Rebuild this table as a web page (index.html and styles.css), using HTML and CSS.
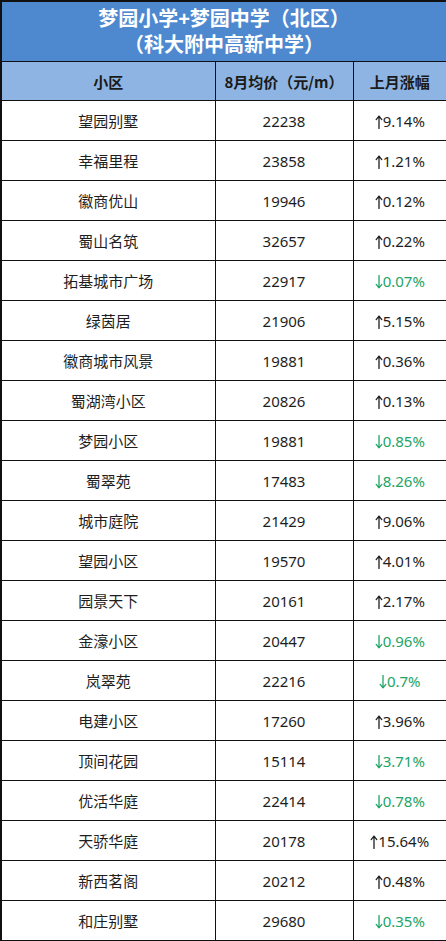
FILE: index.html
```html
<!DOCTYPE html>
<html lang="zh">
<head>
<meta charset="utf-8">
<link rel="stylesheet" href="styles.css">
</head>
<body>
<svg width="0" height="0" class="defs" aria-hidden="true">
  <defs>
    <symbol id="up" viewBox="0 0 8 14"><path d="M4 13.5V1.2M1.2 4.6L4 1.2L6.8 4.6" fill="none" stroke="currentColor" stroke-width="1.3" stroke-linecap="round" stroke-linejoin="round"/></symbol>
    <symbol id="dn" viewBox="0 0 8 14"><path d="M4 0.5V12.8M1.2 9.4L4 12.8L6.8 9.4" fill="none" stroke="currentColor" stroke-width="1.3" stroke-linecap="round" stroke-linejoin="round"/></symbol>
  </defs>
</svg>
<table class="tbl">
  <colgroup><col class="c1"><col class="c2"><col class="c3"></colgroup>
  <thead>
    <tr><th colspan="3" class="title"><div class="tl">梦园小学+梦园中学（北区）</div><div class="tl">（科大附中高新中学）</div></th></tr>
    <tr class="hdr"><th>小区</th><th>8月均价（元/m）</th><th>上月涨幅</th></tr>
  </thead>
  <tbody>
    <tr><td>望园别墅</td><td>22238</td><td><svg class="ar"><use href="#up"/></svg>9.14%</td></tr>
    <tr><td>幸福里程</td><td>23858</td><td><svg class="ar"><use href="#up"/></svg>1.21%</td></tr>
    <tr><td>徽商优山</td><td>19946</td><td><svg class="ar"><use href="#up"/></svg>0.12%</td></tr>
    <tr><td>蜀山名筑</td><td>32657</td><td><svg class="ar"><use href="#up"/></svg>0.22%</td></tr>
    <tr><td>拓基城市广场</td><td>22917</td><td class="down"><svg class="ar"><use href="#dn"/></svg>0.07%</td></tr>
    <tr><td>绿茵居</td><td>21906</td><td><svg class="ar"><use href="#up"/></svg>5.15%</td></tr>
    <tr><td>徽商城市风景</td><td>19881</td><td><svg class="ar"><use href="#up"/></svg>0.36%</td></tr>
    <tr><td>蜀湖湾小区</td><td>20826</td><td><svg class="ar"><use href="#up"/></svg>0.13%</td></tr>
    <tr><td>梦园小区</td><td>19881</td><td class="down"><svg class="ar"><use href="#dn"/></svg>0.85%</td></tr>
    <tr><td>蜀翠苑</td><td>17483</td><td class="down"><svg class="ar"><use href="#dn"/></svg>8.26%</td></tr>
    <tr><td>城市庭院</td><td>21429</td><td><svg class="ar"><use href="#up"/></svg>9.06%</td></tr>
    <tr><td>望园小区</td><td>19570</td><td><svg class="ar"><use href="#up"/></svg>4.01%</td></tr>
    <tr><td>园景天下</td><td>20161</td><td><svg class="ar"><use href="#up"/></svg>2.17%</td></tr>
    <tr><td>金濠小区</td><td>20447</td><td class="down"><svg class="ar"><use href="#dn"/></svg>0.96%</td></tr>
    <tr><td>岚翠苑</td><td>22216</td><td class="down"><svg class="ar"><use href="#dn"/></svg>0.7%</td></tr>
    <tr><td>电建小区</td><td>17260</td><td><svg class="ar"><use href="#up"/></svg>3.96%</td></tr>
    <tr><td>顶间花园</td><td>15114</td><td class="down"><svg class="ar"><use href="#dn"/></svg>3.71%</td></tr>
    <tr><td>优活华庭</td><td>22414</td><td class="down"><svg class="ar"><use href="#dn"/></svg>0.78%</td></tr>
    <tr><td>天骄华庭</td><td>20178</td><td><svg class="ar"><use href="#up"/></svg>15.64%</td></tr>
    <tr><td>新西茗阁</td><td>20212</td><td><svg class="ar"><use href="#up"/></svg>0.48%</td></tr>
    <tr><td>和庄别墅</td><td>29680</td><td class="down"><svg class="ar"><use href="#dn"/></svg>0.35%</td></tr>
  </tbody>
</table>
</body>
</html>
```
FILE: styles.css
```css
html, body {
  margin: 0;
  padding: 0;
  background: #ffffff;
}
body {
  font-family: "Noto Sans", "Noto Sans CJK SC", sans-serif;
  color: #1e1e1e;
}
.defs {
  position: absolute;
  width: 0;
  height: 0;
  overflow: hidden;
}
.tbl {
  width: 446px;
  border-collapse: collapse;
  table-layout: fixed;
  border: 2px solid #111;
}
.c1 { width: 214px; }
.c2 { width: 138px; }
.c3 { width: 94px; }
.tbl th, .tbl td {
  border: 1px solid #111;
  text-align: center;
  padding: 0;
  font-size: 15px;
}
.tbl .title {
  background: #4e88cf;
  color: #ffffff;
  font-size: 20px;
  font-weight: 700;
  height: 59px;
  border-top: none;
  border-left-color: #4e88cf;
  border-right-color: #4e88cf;
  font-family: "Liberation Sans", "Noto Sans CJK SC", sans-serif;
}
.tl {
  height: 26px;
  line-height: 26px;
}
.hdr th {
  background: #8db4e2;
  color: #1a1a1a;
  font-weight: 700;
  height: 38px;
  font-family: "Noto Sans CJK SC", sans-serif;
}
.tbl td {
  height: 39px;
}
.ar {
  width: 8px;
  height: 14px;
  vertical-align: -2px;
}
.down {
  color: #22a466;
}
```
